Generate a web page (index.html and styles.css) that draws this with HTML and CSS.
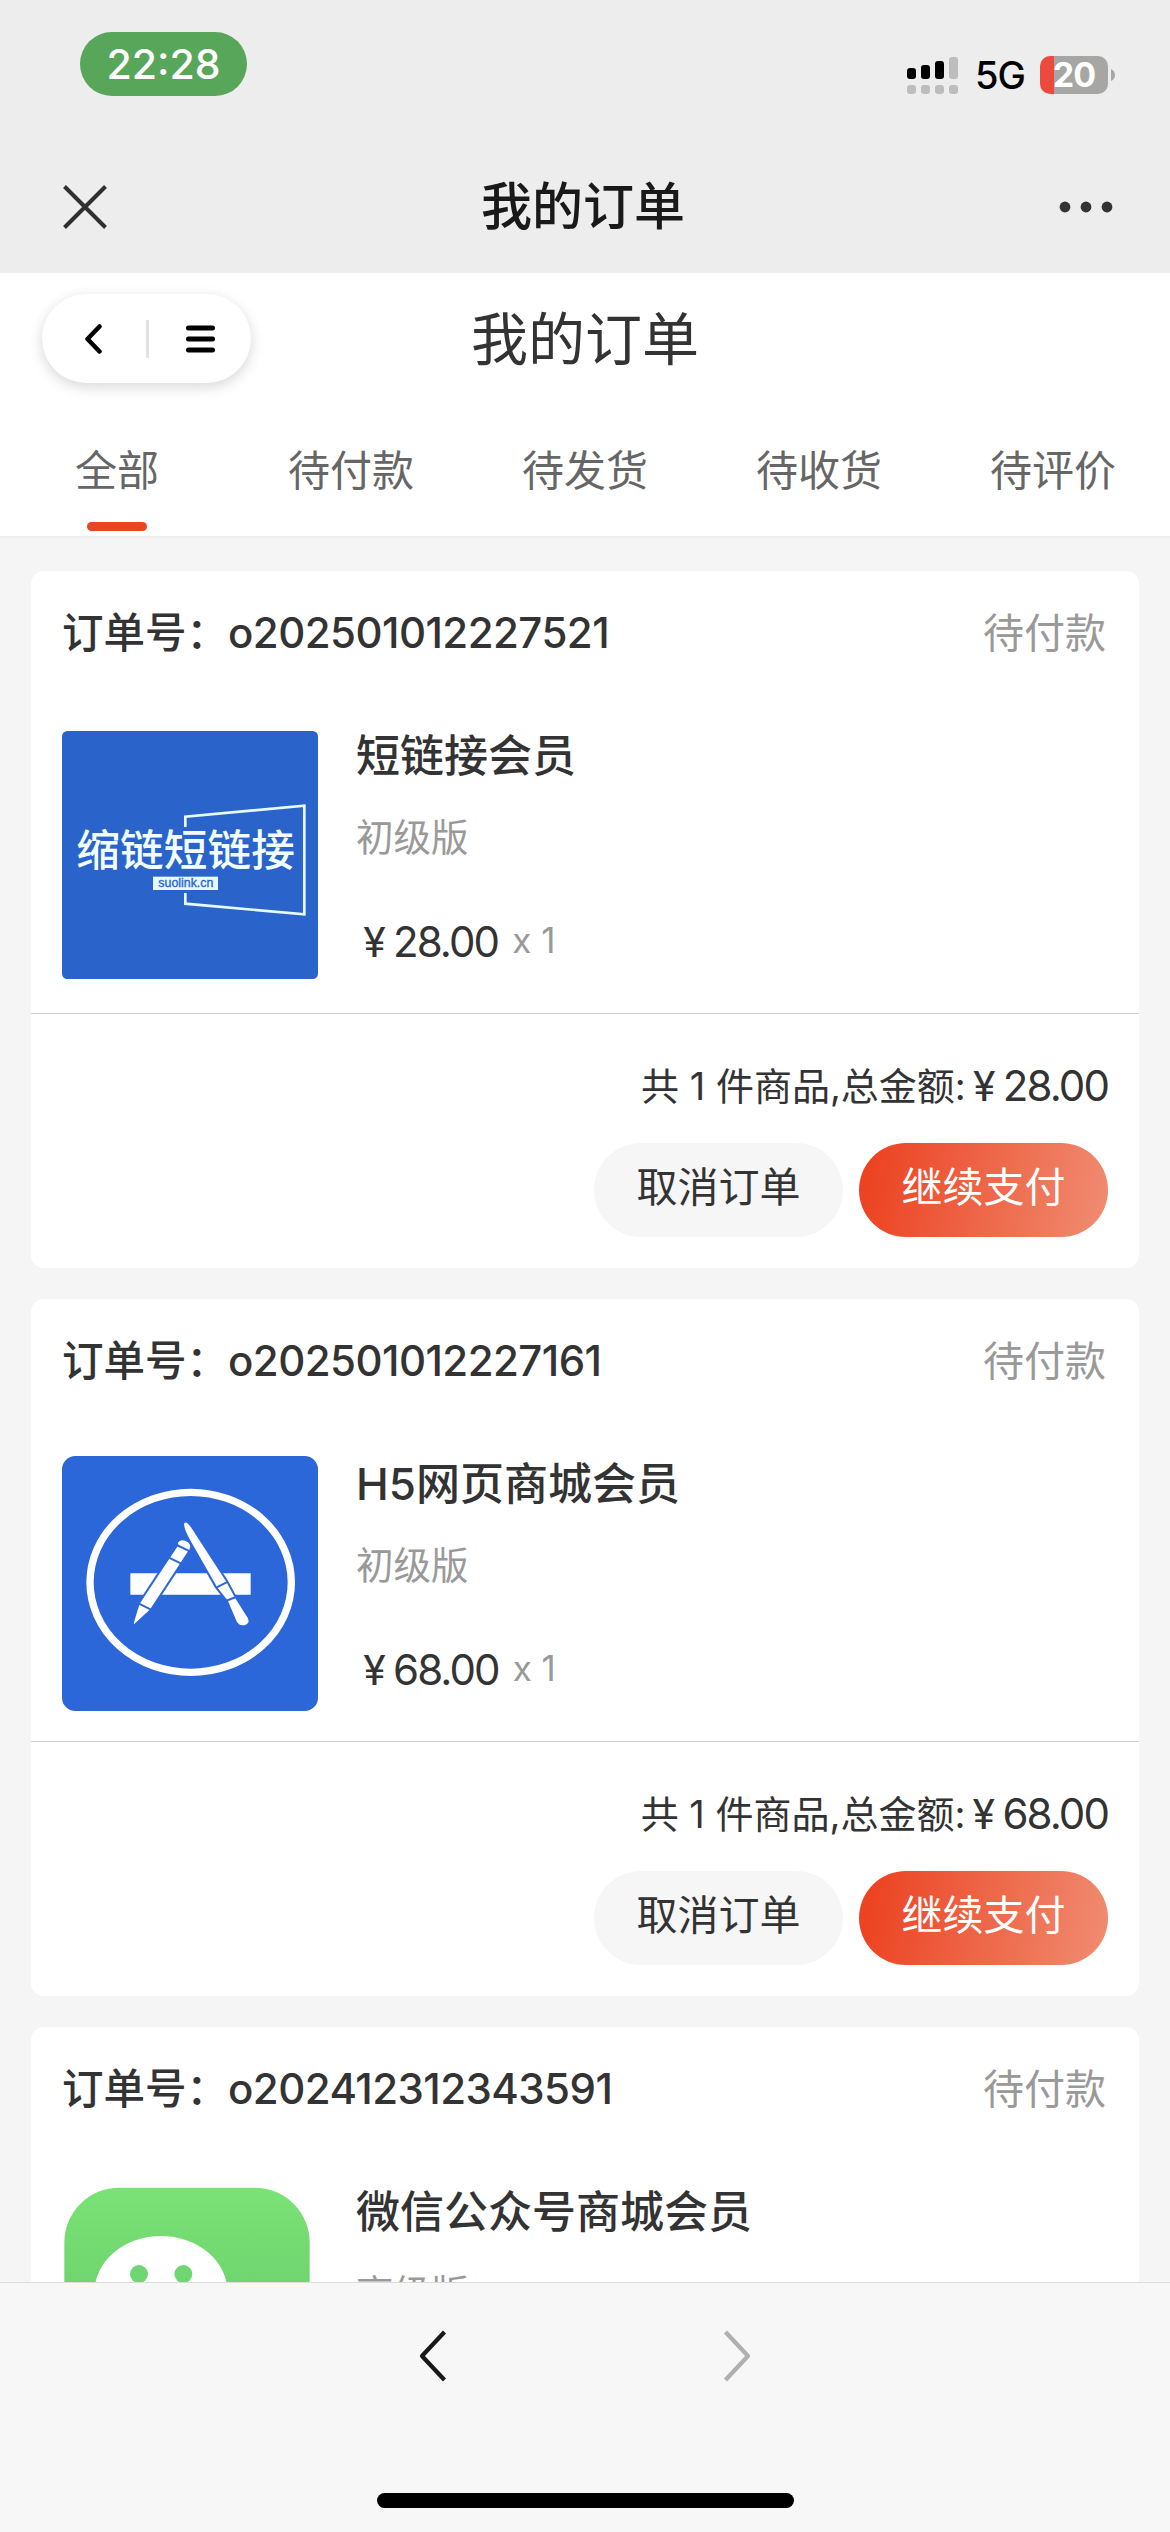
FILE: index.html
```html
<!DOCTYPE html>
<html lang="zh-CN">
<head>
<meta charset="utf-8">
<title>我的订单</title>
<link rel="stylesheet" href="styles.css">
</head>
<body>
<div class="screen">
  <header class="top">
    <div class="status">
      <span class="clock">22:28</span>
      <div class="status-right">
        <svg class="signal" viewBox="0 0 51 37" width="51" height="37">
          <g fill="#000"><rect x="0" y="11" width="9" height="11" rx="3"/><rect x="14" y="8" width="9" height="14" rx="3"/><rect x="28" y="4" width="9" height="18" rx="3"/></g>
          <g fill="#bdbdbd"><rect x="42" y="0" width="9" height="22" rx="3"/><rect x="0" y="28" width="9" height="9" rx="3"/><rect x="14" y="28" width="9" height="9" rx="3"/><rect x="28" y="28" width="9" height="9" rx="3"/><rect x="42" y="28" width="9" height="9" rx="3"/></g>
        </svg>
        <span class="network">5G</span>
        <span class="battery">20</span>
        <svg class="nub" viewBox="0 0 4 12" width="4" height="12"><path d="M0 0Q4 2 4 6T0 12Z" fill="#a6a6a4"/></svg>
      </div>
    </div>
    <div class="nav">
      <svg viewBox="0 0 44 44" width="44" height="44"><path d="M1.5 1.5L42.500 42.500M42.500 1.500L1.500 42.500" stroke="#2f2f2f" stroke-width="4" fill="none"/></svg>
      <h1 class="nav-title">我的订单</h1>
      <svg viewBox="0 0 54 12" width="54" height="12" fill="#333"><circle cx="6" cy="6" r="5.400"/><circle cx="27" cy="6" r="5.400"/><circle cx="48" cy="6" r="5.400"/></svg>
    </div>
  </header>

  <section class="page-head">
    <div class="capsule">
      <svg viewBox="0 0 17 30" width="17" height="30"><path d="M14.500 2.500L2.500 15L14.500 27.500" fill="none" stroke="#000" stroke-width="4.500" stroke-linecap="round" stroke-linejoin="round"/></svg>
      <i class="capsule-line"></i>
      <svg viewBox="0 0 29 28" width="29" height="28"><path d="M2.500 3H26.500M2.500 14H26.500M2.500 25H26.500" stroke="#000" stroke-width="5" stroke-linecap="round"/></svg>
    </div>
    <h2 class="page-title">我的订单</h2>
  </section>
  <nav class="tabs">
    <span class="tab active">全部</span>
    <span class="tab">待付款</span>
    <span class="tab">待发货</span>
    <span class="tab">待收货</span>
    <span class="tab">待评价</span>
  </nav>

  <main class="list">
    <article class="card">
      <div class="card-head"><span class="order-no">订单号：<b class="no">o202501012227521</b></span><span class="state">待付款</span></div>
      <div class="goods">
        <svg class="thumb" viewBox="36 33 768 744" width="256" height="248">
          <rect x="36" y="33" width="768" height="744" rx="16" fill="#2a64cb"/>
          <path d="M406 321V290L763 257V583L406 551V519" fill="none" stroke="#e6fbff" stroke-width="8"/>
          <text class="logo-text" x="79" y="437" textLength="656">缩链短链接</text>
          <rect x="309" y="470" width="195" height="40" fill="#e6fbff"/>
          <text class="logo-url" x="325" y="502" textLength="165" lengthAdjust="spacingAndGlyphs">suolink.cn</text>
        </svg>
        <div class="info">
          <h3 class="name">短链接会员</h3>
          <p class="spec">初级版</p>
          <p class="price"><i class="yen">¥</i>28.00<span class="qty">x 1</span></p>
        </div>
      </div>
      <div class="card-foot">
        <p class="sum">共 1 件商品,总金额:<span class="amount"><i class="yen">¥</i>28.00</span></p>
        <div class="actions"><button class="btn">取消订单</button><button class="btn pay">继续支付</button></div>
      </div>
    </article>

    <article class="card">
      <div class="card-head"><span class="order-no">订单号：<b class="no">o202501012227161</b></span><span class="state">待付款</span></div>
      <div class="goods">
        <svg class="thumb" viewBox="36 30 768 765" width="256" height="255">
          <rect x="36" y="30" width="768" height="765" rx="40" fill="#2c67da"/>
          <ellipse cx="422" cy="409" rx="302" ry="270" fill="none" stroke="#fff" stroke-width="22"/>
          <path d="M241 382H602V446H241Z" fill="#fff"/>
          <g fill="#fff" stroke="#2c67da" stroke-width="6">
            <path d="M382 297Q376 287 394 280Q410 279 421 292Q428 305 417 317L394 352L302 493L248 542Q246 533 267 471L357 334Z"/>
            <path d="M380 297L420 316M355 334L394 353M267 473L303 491" fill="none"/>
            <path d="M400 240Q397 225 410 227Q420 231 440 265L531 405L557 453L590 505Q608 528 590 538Q570 547 558 529L531 466L498 424L425 296Q401 255 400 240Z"/>
            <path d="M500 424L534 407M527 465L558 453" fill="none"/>
          </g>
        </svg>
        <div class="info">
          <h3 class="name">H5网页商城会员</h3>
          <p class="spec">初级版</p>
          <p class="price"><i class="yen">¥</i>68.00<span class="qty">x 1</span></p>
        </div>
      </div>
      <div class="card-foot">
        <p class="sum">共 1 件商品,总金额:<span class="amount"><i class="yen">¥</i>68.00</span></p>
        <div class="actions"><button class="btn">取消订单</button><button class="btn pay">继续支付</button></div>
      </div>
    </article>

    <article class="card">
      <div class="card-head"><span class="order-no">订单号：<b class="no">o202412312343591</b></span><span class="state">待付款</span></div>
      <div class="goods">
        <svg class="thumb" viewBox="36 38 768 768" width="256" height="256">
          <defs><linearGradient id="green" x1="0" y1="0" x2="0" y2="1"><stop offset="0" stop-color="#7ae276"/><stop offset="1" stop-color="#5fc163"/></linearGradient></defs>
          <rect x="43" y="52" width="736" height="740" rx="165" fill="url(#green)"/>
          <ellipse cx="333" cy="367" rx="200" ry="170" fill="#fff"/>
          <circle cx="267" cy="311" r="27" fill="#70d671"/><circle cx="400" cy="311" r="27" fill="#70d671"/>
        </svg>
        <div class="info">
          <h3 class="name">微信公众号商城会员</h3>
          <p class="spec">高级版</p>
        </div>
      </div>
    </article>
  </main>

  <footer class="bottom">
    <div class="history">
      <svg viewBox="0 0 28 52" width="28" height="52"><path d="M25.500 2L3 26L25.500 50" fill="none" stroke="#191919" stroke-width="4.200" stroke-linejoin="round"/></svg>
      <svg viewBox="0 0 28 52" width="28" height="52"><path d="M2.500 2L25 26L2.500 50" fill="none" stroke="#b0b0b0" stroke-width="4.200" stroke-linejoin="round"/></svg>
    </div>
    <div class="home-bar"></div>
  </footer>
</div>
</body>
</html>
```
FILE: styles.css
```css
* { box-sizing: border-box; margin: 0; padding: 0; }
i { font-style: normal; }
body {
  font-family: Inter, "Noto Sans CJK SC", sans-serif;
  color: #333;
  background: #f5f5f5;
}
.screen {
  width: 1170px;
  height: 2532px;
  display: flex;
  flex-direction: column;
  overflow: hidden;
}

/* system status + browser bar */
.top { height: 273px; flex: none; background: #ededed; }
.status {
  height: 146px;
  padding: 32px 55px 0 80px;
  display: flex;
  justify-content: space-between;
  align-items: flex-start;
}
.clock {
  width: 167px;
  height: 64px;
  border-radius: 32px;
  background: #58a65a;
  color: #fff;
  font-size: 41px;
  font-weight: 500;
  line-height: 64px;
  text-align: center;
}
.status-right { display: flex; align-items: center; padding-top: 24px; height: 62px; }
.network {
  margin-left: 17px;
  width: 65px;
  color: #000;
  font-size: 38px;
  font-weight: 500;
  line-height: 38px;
  letter-spacing: -1px;
}
.battery {
  width: 68px;
  height: 38px;
  border-radius: 10px;
  background: linear-gradient(90deg, #ec4a3c 14px, #a6a6a4 14px);
  color: #fff;
  font-size: 34px;
  font-weight: 700;
  line-height: 38px;
  text-align: center;
  letter-spacing: -1px;
}
.nub { margin-left: 3px; }
.nav {
  height: 122px;
  padding: 0 57px 0 63px;
  display: flex;
  align-items: center;
  justify-content: space-between;
}
.nav-title { font-size: 51px; font-weight: 500; color: #191919; line-height: 70px; }

/* page title */
.page-head {
  flex: none;
  height: 131px;
  background: #fff;
  display: grid;
  grid-template-columns: 251px 1fr 251px;
  align-items: center;
}
.capsule {
  justify-self: end;
  width: 209px;
  height: 89px;
  border-radius: 45px;
  background: #fff;
  box-shadow: 0 4px 14px rgba(0, 0, 0, .16);
  display: flex;
  align-items: center;
  justify-content: space-between;
  padding: 0 36px 0 43px;
}
.capsule-line { width: 3px; height: 38px; margin-left: 6px; background: #e2e2e2; }
.page-title { text-align: center; font-size: 57px; font-weight: 400; line-height: 80px; padding-top: 2px; }

.tabs {
  flex: none;
  height: 133px;
  background: #fff;
  display: grid;
  grid-template-columns: repeat(5, 1fr);
}
.tab {
  display: flex;
  flex-direction: column;
  align-items: center;
  padding-top: 37px;
  font-size: 42px;
  line-height: 60px;
  color: #666;
}
.active::after {
  content: "";
  width: 60px;
  height: 9px;
  margin-top: 21px;
  border-radius: 5px;
  background: #ec4324;
}

/* orders */
.list {
  flex: 1;
  min-height: 0;
  overflow: hidden;
  padding: 33px 31px 0;
  border-top: 2px solid #eee;
  margin-top: -1px;
  display: flex;
  flex-direction: column;
  gap: 31px;
}
.card { flex: none; height: 697px; background: #fff; border-radius: 13px; overflow: hidden; }
.card-head {
  height: 126px;
  padding: 0 33px 8px 31px;
  display: flex;
  align-items: center;
  justify-content: space-between;
  font-size: 41.500px;
}
.order-no { font-weight: 500; white-space: nowrap; }
.no { font-weight: 500; font-size: 42px; letter-spacing: -.550px; }
.state { font-size: 41px; color: #999; }
.goods {
  height: 317px;
  padding: 30px 31px;
  display: flex;
  gap: 38px;
  border-bottom: 1px solid #cecece;
}
.thumb { flex: none; align-self: center; }
.logo-text { fill: #f2feff; font-size: 131px; font-weight: 500; font-family: "Noto Sans CJK SC", sans-serif; }
.logo-url { fill: #2a64cb; stroke: #2a64cb; stroke-width: 1px; font-size: 37px; font-family: "Liberation Sans", sans-serif; }
.name { font-size: 44px; font-weight: 500; line-height: 58px; white-space: nowrap; }
.spec { margin-top: 28px; font-size: 37.500px; line-height: 50px; color: #999; }
.price { margin-top: 47px; height: 60px; font-size: 42px; line-height: 60px; letter-spacing: -1.900px; }
.yen {
  display: inline-block;
  width: 37px;
  font-family: Roboto, Inter, sans-serif;
  font-size: 42px;
  letter-spacing: 0;
  line-height: 50px;
  text-align: center;
}
.qty { margin-left: 14px; font-size: 35px; color: #999; letter-spacing: 0; vertical-align: 4px; }
.card-foot { padding: 43px 31px 31px; }
.sum {
  height: 60px;
  display: flex;
  justify-content: flex-end;
  align-items: center;
  font-size: 38px;
  line-height: 54px;
  padding-bottom: 3px;
  white-space: pre;
}
.amount { font-size: 42px; letter-spacing: -1.900px; }
.actions { margin-top: 26px; display: flex; justify-content: flex-end; gap: 16px; }
.btn {
  width: 249px;
  height: 94px;
  padding-bottom: 6px;
  border: 0;
  border-radius: 47px;
  background: #f6f6f6;
  color: #333;
  font: 400 41px/60px Inter, "Noto Sans CJK SC", sans-serif;
}
.pay { color: #fff; background: linear-gradient(100deg, #ec4322 5%, #f08b70 98%); }

/* browser history bar */
.bottom {
  flex: none;
  height: 250px;
  background: #f7f7f7;
  border-top: 1px solid #dcdcdc;
  display: flex;
  flex-direction: column;
  align-items: center;
  justify-content: space-between;
  padding: 47px 0 24px;
}
.history { display: flex; gap: 276px; }
.home-bar { width: 417px; height: 15px; border-radius: 8px; background: #000; }
```
